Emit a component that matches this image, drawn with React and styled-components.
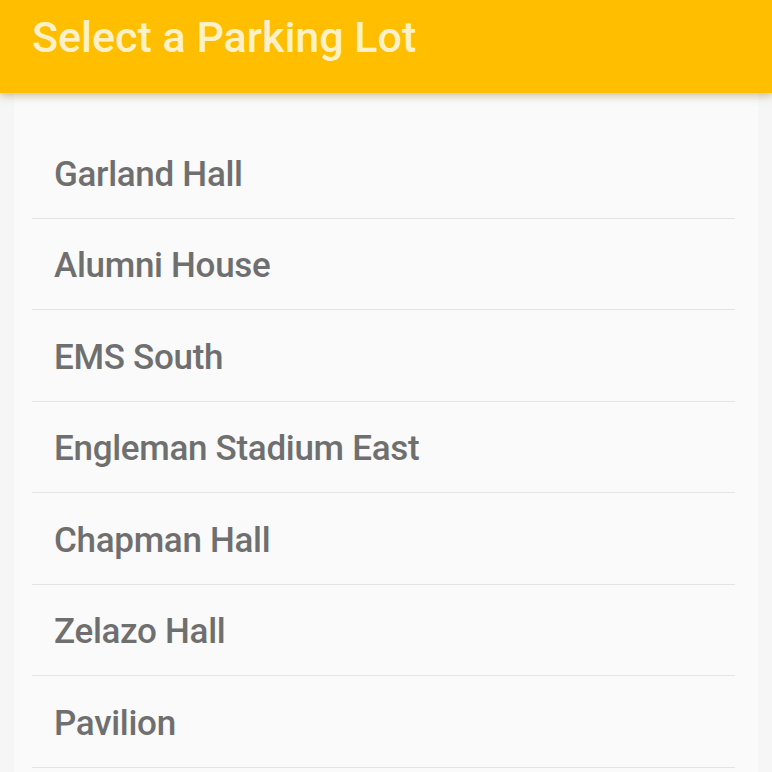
import styled, { createGlobalStyle } from "styled-components";

const GlobalStyle = createGlobalStyle`
  html, body {
    margin: 0;
    padding: 0;
    background: #f6f6f6;
    font-family: Roboto, "Liberation Sans", sans-serif;
  }
`;

const Page = styled.div`
  width: 772px;
  height: 772px;
  overflow: hidden;
  background: #f6f6f6;
`;

const Header = styled.header`
  height: 93px;
  background: #ffbf00;
  box-shadow: 0 3px 8px rgba(120, 90, 0, 0.35);
  display: flex;
  align-items: center;
  padding: 0 32px 20px;
  box-sizing: border-box;
  position: relative;
  z-index: 1;
`;

const Title = styled.h1`
  margin: 0;
  font-size: 43px;
  font-weight: 500;
  color: rgba(255, 255, 255, 0.8);
  letter-spacing: 0;
`;

const Card = styled.div`
  margin: 0 14px;
  padding: 34px 23px 0 18px;
  background: #fafafa;
  min-height: 680px;
`;

const List = styled.ul`
  list-style: none;
  margin: 0;
  padding: 0;
`;

const Item = styled.li`
  height: 91.5px;
  box-sizing: border-box;
  border-bottom: 1.5px solid #e4e4e4;
  display: flex;
  align-items: center;
  padding: 4px 0 0 22px;
  font-size: 35px;
  font-weight: 500;
  color: #6f6f6f;
  letter-spacing: -0.3px;
`;

const lots = [
  "Garland Hall",
  "Alumni House",
  "EMS South",
  "Engleman Stadium East",
  "Chapman Hall",
  "Zelazo Hall",
  "Pavilion",
];

export default function App() {
  return (
    <Page>
      <GlobalStyle />
      <Header>
        <Title>Select a Parking Lot</Title>
      </Header>
      <Card>
        <List>
          {lots.map((name) => (
            <Item key={name}>{name}</Item>
          ))}
        </List>
      </Card>
    </Page>
  );
}
